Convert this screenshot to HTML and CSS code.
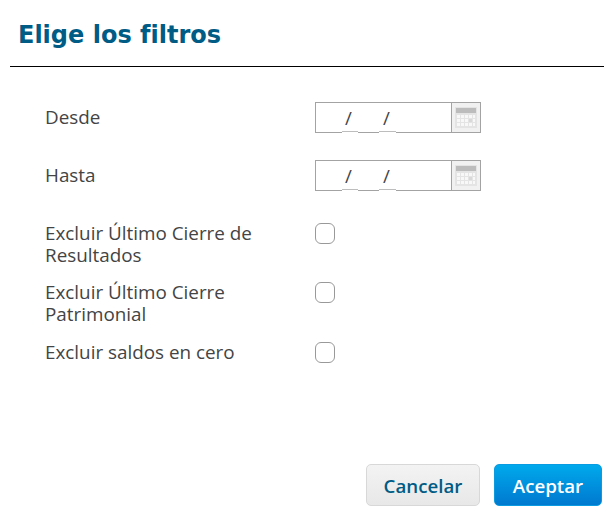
FILE: index.html
```html
<!DOCTYPE html>
<html lang="es">
<head>
  <meta charset="UTF-8">
  <meta name="viewport" content="width=device-width, initial-scale=1.0">
  <title>Elige los filtros</title>
  <link rel="stylesheet" href="styles.css">
</head>
<body>
  <div class="dialog">
    <div class="header">
      <h1>Elige los filtros</h1>
    </div>

    <form class="filters">
      <div class="row date-row">
        <label>Desde</label>
        <div class="date-field">
          <div class="date-input">
            <span class="date-part part-month"></span>
            <span class="date-part part-year"></span>
            <span class="slash slash-first">/</span>
            <span class="slash slash-second">/</span>
          </div>
          <button type="button" class="calendar-btn" aria-label="Calendario">
            <svg width="22" height="21" viewBox="0 0 22 21">
              <rect width="22" height="21" fill="#e4e4e4"/>
              <rect x="1" y="1" width="20" height="5" fill="#bcbcbc"/>
              <path d="M2 8h3v3H2zM6 8h3v3H6zM10 8h3v3h-3zM14 8h3v3h-3zM18 8h2v3h-2zM2 12h3v3H2zM6 12h3v3H6zM10 12h3v3h-3zM18 12h2v3h-2zM2 16h3v3H2zM6 16h3v3H6zM10 16h3v3h-3zM14 16h3v3h-3zM18 16h2v3h-2z" fill="#f8f8f8"/>
              <rect x="14" y="12" width="3" height="3" fill="#d9d9d9"/>
            </svg>
          </button>
        </div>
      </div>

      <div class="row date-row">
        <label>Hasta</label>
        <div class="date-field">
          <div class="date-input">
            <span class="date-part part-month"></span>
            <span class="date-part part-year"></span>
            <span class="slash slash-first">/</span>
            <span class="slash slash-second">/</span>
          </div>
          <button type="button" class="calendar-btn" aria-label="Calendario">
            <svg width="22" height="21" viewBox="0 0 22 21">
              <rect width="22" height="21" fill="#e4e4e4"/>
              <rect x="1" y="1" width="20" height="5" fill="#bcbcbc"/>
              <path d="M2 8h3v3H2zM6 8h3v3H6zM10 8h3v3h-3zM14 8h3v3h-3zM18 8h2v3h-2zM2 12h3v3H2zM6 12h3v3H6zM10 12h3v3h-3zM18 12h2v3h-2zM2 16h3v3H2zM6 16h3v3H6zM10 16h3v3h-3zM14 16h3v3h-3zM18 16h2v3h-2z" fill="#f8f8f8"/>
              <rect x="14" y="12" width="3" height="3" fill="#d9d9d9"/>
            </svg>
          </button>
        </div>
      </div>

      <div class="row check-row">
        <label>Excluir Último Cierre de Resultados</label>
        <span class="checkbox"></span>
      </div>

      <div class="row check-row">
        <label>Excluir Último Cierre Patrimonial</label>
        <span class="checkbox"></span>
      </div>

      <div class="row check-row">
        <label>Excluir saldos en cero</label>
        <span class="checkbox"></span>
      </div>
    </form>

    <div class="button-group">
      <button type="button" class="cancel-btn">Cancelar</button>
      <button type="button" class="accept-btn">Aceptar</button>
    </div>
  </div>
</body>
</html>
```

FILE: styles.css
```css
html, body {
  margin: 0;
  height: 100%;
  background: #fff;
}

body {
  font-family: "Open Sans", sans-serif;
  overflow: hidden;
}

.dialog {
  width: 614px;
  height: 515px;
  display: flex;
  flex-direction: column;
  box-sizing: border-box;
}

.header {
  margin: 0 10px;
  height: 67px;
  box-sizing: border-box;
  border-bottom: 1px solid #000;
}

.header h1 {
  margin: 0;
  padding: 20px 0 0 8px;
  font-family: "DejaVu Sans", sans-serif;
  font-size: 24px;
  line-height: 30px;
  font-weight: 700;
  color: #005b85;
}

.filters {
  flex: 1;
  padding: 35px 0 0 45px;
}

.row {
  display: flex;
  align-items: flex-start;
}

.row label {
  width: 270px;
  font-size: 18.85px;
  line-height: 22px;
  color: #444;
}

.date-row {
  height: 31px;
  margin-bottom: 27px;
}

.date-row label {
  padding-top: 4px;
}

.date-row + .check-row {
  margin-top: 31px;
}

.check-row {
  margin-bottom: 15px;
}

.check-row:last-child {
  margin-top: 16px;
}

.check-row label {
  width: 245px;
  margin-right: 25px;
}

.date-field {
  display: flex;
}

.date-input {
  position: relative;
  width: 136px;
  height: 31px;
  box-sizing: border-box;
  border: 1px solid #a3a3a3;
  border-right: none;
}

/* segments of the masked input sit one pixel above the bottom border */
.date-part {
  position: absolute;
  bottom: -1px;
  height: 1px;
  background: #fff;
  border-top: 1px solid #bdbdbd;
}

.part-month {
  left: 26px;
  width: 16px;
}

.part-year {
  left: 63px;
  width: 17px;
}

.slash {
  position: absolute;
  top: 4px;
  font-size: 18.72px;
  line-height: 22px;
  color: #444;
}

.slash-first {
  left: 29px;
}

.slash-second {
  left: 67px;
}

.calendar-btn {
  width: 30px;
  height: 31px;
  padding: 0;
  box-sizing: border-box;
  border: 1px solid #a3a3a3;
  background: #f1f1f1;
  display: flex;
  align-items: center;
  justify-content: center;
}

.checkbox {
  display: block;
  width: 20px;
  height: 21px;
  margin-top: 1px;
  box-sizing: border-box;
  border: 1px solid #999;
  border-radius: 6px;
  background: #fff;
}

.button-group {
  display: flex;
  justify-content: flex-end;
  gap: 14px;
  padding: 0 12px 9px 0;
}

.button-group button {
  height: 42px;
  box-sizing: border-box;
  border-radius: 5px;
  font-family: "Open Sans", sans-serif;
  font-size: 18.72px;
  font-weight: 600;
  cursor: pointer;
}

.cancel-btn {
  width: 114px;
  background: linear-gradient(#f3f3f3, #e8e8e8);
  border: 1px solid #d8d8d8;
  color: #005b85;
}

.accept-btn {
  width: 108px;
  background: linear-gradient(#00a9ec, #0079cf);
  border: 1px solid #0a9be0;
  color: #fff;
}
```
